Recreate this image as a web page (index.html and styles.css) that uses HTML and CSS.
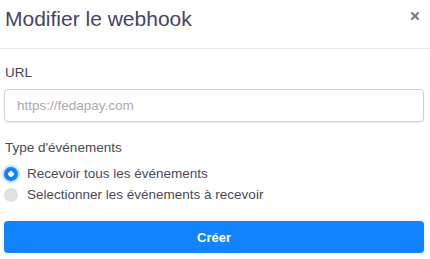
FILE: index.html
```html
<!DOCTYPE html>
<html lang="fr">
<head>
<meta charset="utf-8">
<title>Modifier le webhook</title>
<link rel="stylesheet" href="styles.css">
</head>
<body>
<div class="modal">
  <div class="modal-header">
    <h1 class="modal-title">Modifier le webhook</h1>
    <button class="close" type="button" aria-label="Fermer">
      <svg width="8" height="8" viewBox="0 0 8 8"><path d="M1 1L7 7M7 1L1 7" stroke="#787878" stroke-width="2" stroke-linecap="square"/></svg>
    </button>
  </div>
  <form class="modal-body">
    <label class="field-label" for="url">URL</label>
    <input class="text-input" id="url" type="text" placeholder="https://fedapay.com">
    <div class="field-label type-label">Type d'événements</div>
    <div class="radios">
      <label class="radio-row">
        <input class="radio" type="radio" name="type" checked>
        <span>Recevoir tous les événements</span>
      </label>
      <label class="radio-row">
        <input class="radio" type="radio" name="type">
        <span>Selectionner les événements à recevoir</span>
      </label>
    </div>
    <button class="submit" type="button">Créer</button>
  </form>
</div>
</body>
</html>
```
FILE: styles.css
```css
html, body {
  margin: 0;
  padding: 0;
  background: #ffffff;
}
body {
  font-family: "Liberation Sans", Arial, sans-serif;
  font-size: 13.5px;
  color: #4a4a58;
}
.modal {
  width: 430px;
}
.modal-header {
  display: flex;
  justify-content: space-between;
  align-items: flex-start;
  padding: 6px 11px 17px 5px;
  border-bottom: 1px solid #e6e9ee;
}
.modal-title {
  margin: 0;
  font-size: 21px;
  line-height: 25px;
  font-weight: normal;
  color: #45436a;
}
.close {
  border: 0;
  background: none;
  padding: 0;
  margin-top: 6px;
  width: 8px;
  height: 8px;
  display: block;
}
.close svg {
  display: block;
}
.modal-body {
  display: flex;
  flex-direction: column;
  padding: 15px 6px 0 4px;
}
.field-label {
  display: block;
  line-height: 18px;
  padding-left: 1px;
  color: #3f3e5a;
}
.text-input {
  margin-top: 7px;
  box-sizing: border-box;
  width: 420px;
  height: 33px;
  border: 1.5px solid #cdd1d7;
  border-radius: 4px;
  padding: 0 12px;
  font-family: "Liberation Sans", Arial, sans-serif;
  font-size: 13.5px;
  color: #333;
  box-shadow: 0 1px 2px rgba(0, 0, 0, 0.08);
  outline: none;
}
.text-input::placeholder {
  color: #a9a9ad;
}
.type-label {
  margin-top: 17px;
  color: #4a4a58;
}
.radios {
  display: flex;
  flex-direction: column;
  margin-top: 7px;
}
.radio-row {
  display: flex;
  align-items: center;
  height: 20px;
  line-height: 20px;
  color: #4a4a5c;
}
.radio-row + .radio-row {
  margin-top: 1px;
}
.radio {
  appearance: none;
  -webkit-appearance: none;
  margin: 0 9px 0 0;
  width: 14px;
  height: 14px;
  border-radius: 50%;
  background: #dee1e6;
  flex: none;
}
.radio:checked {
  background: #1283ff radial-gradient(circle, #ffffff 0 2.6px, transparent 3px);
  box-shadow: 0 0 0 2px rgba(18, 131, 255, 0.25);
}
.submit {
  margin-top: 16px;
  width: 420px;
  height: 32px;
  border: 0;
  border-radius: 4px;
  background: #1283ff;
  color: #ffffff;
  font-family: "Liberation Sans", Arial, sans-serif;
  font-size: 13px;
  font-weight: bold;
  box-shadow: 0 1px 3px rgba(0, 0, 0, 0.15);
}
```
